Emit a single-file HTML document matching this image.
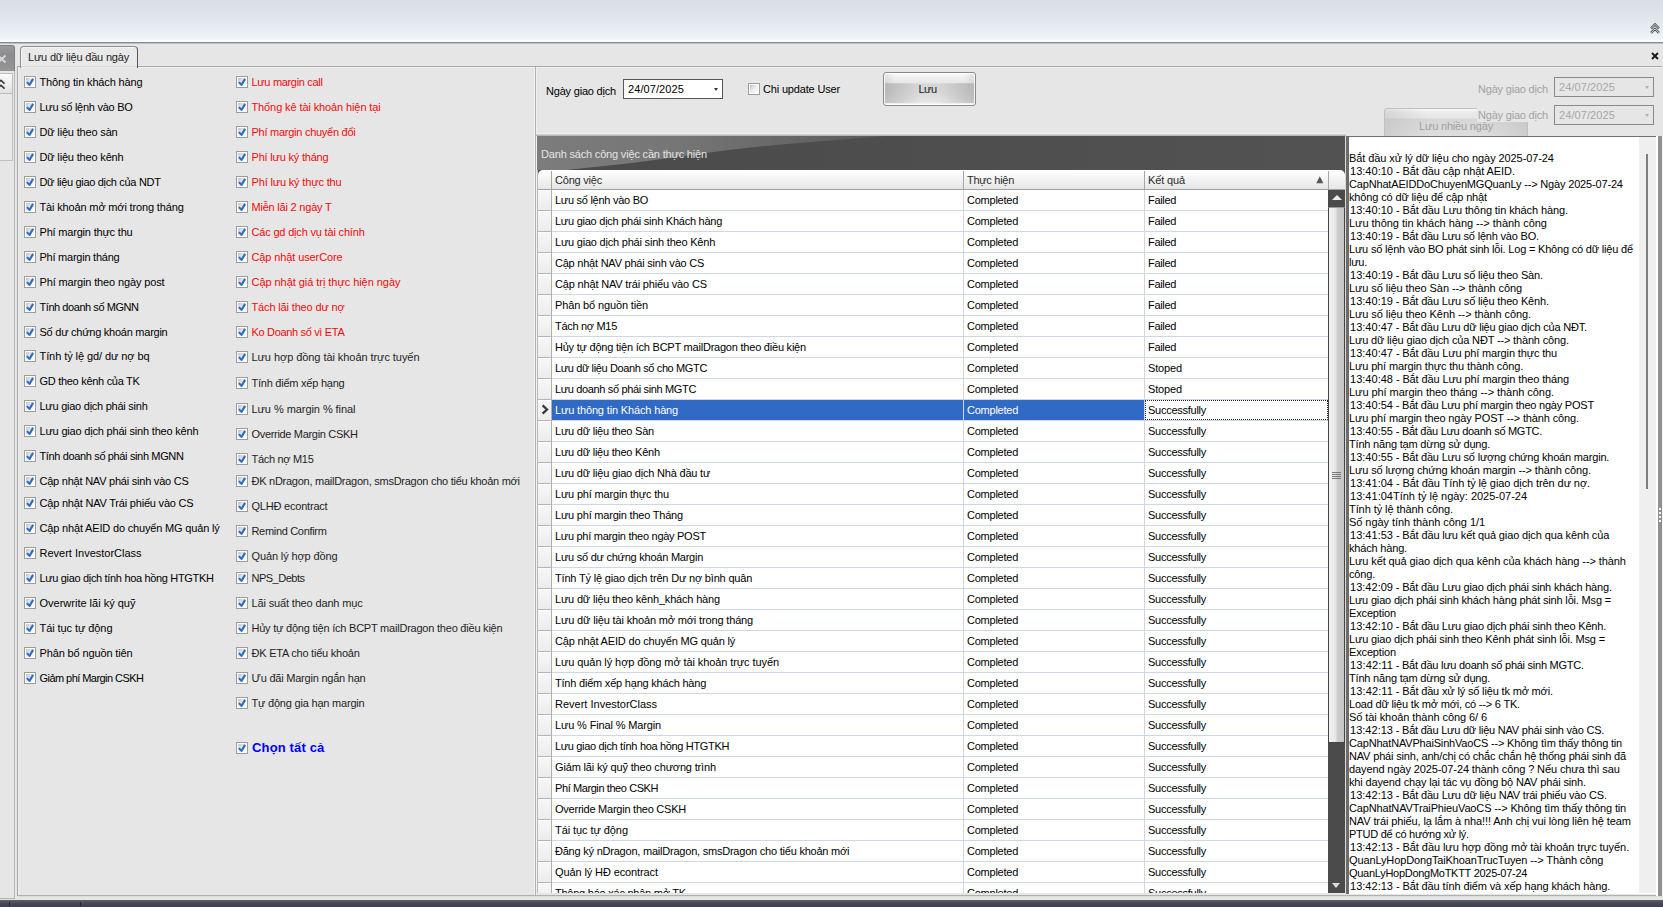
<!DOCTYPE html>
<html><head><meta charset="utf-8"><title>Lưu dữ liệu đầu ngày</title>
<style>
*{box-sizing:border-box;margin:0;padding:0}
html,body{width:1663px;height:907px;overflow:hidden}
body{position:relative;background:#e6e6e6;font-family:"Liberation Sans",sans-serif;font-size:11px;color:#000;letter-spacing:-0.2px}
div,span,pre,i,b,u,s{position:absolute;font-style:normal;font-weight:normal;text-decoration:none}
svg{position:absolute;overflow:visible}
#top{left:0;top:0;width:1663px;height:42px;background:linear-gradient(#d8dde6 0,#dfe4eb 14px,#e7ecf2 28px,#eef2f7 37px,#f8fafc 41px,#fdfefe 42px)}
#topl{left:0;top:42px;width:1663px;height:2px;background:linear-gradient(#858b90 0,#858b90 1px,#bfbfbf 1px,#bfbfbf 2px)}
#ls1{left:0;top:45px;width:15px;height:26px;background:linear-gradient(#9a9a9c,#8c8c8e 40%,#969698);border-right:1px solid #7e7e7e;border-top:1px solid #808080;border-radius:0 3px 0 0}
#ls2{left:0;top:73px;width:13px;height:21px;background:linear-gradient(#fbfbfb,#e2e2e2);border:1px solid #bdbdbd;border-left:0}
#ls3{left:0;top:94px;width:13px;height:67px;background:#e9e9e9;border:1px solid #c0c0c0;border-left:0;border-top:0}
#lsb{left:14px;top:71px;width:1px;height:828px;background:#b8b8b8}
#lsb2{left:0;top:898px;width:15px;height:1px;background:#b0b0b0}
#tab{left:20px;top:46px;width:118px;height:22px;background:#e9e9e9;border:1px solid #8c8c8c;border-right-color:#555;border-bottom:0;border-radius:4px 4px 0 0;box-shadow:inset 1px 1px 0 #f6f6f6}
#tab span{left:7px;top:4px;white-space:nowrap;color:#1c1c1c}
#hl{left:17px;top:66px;width:1645px;height:2px;background:linear-gradient(#a8a8a8 0,#a8a8a8 1px,#f2f2f2 1px,#f2f2f2 2px)}
#hl0{left:21px;top:66px;width:116px;height:2px;background:linear-gradient(#dcdcdc 0,#dcdcdc 1px,#e9e9e9 1px)}
#vl0{left:17px;top:67px;width:2px;height:829px;background:linear-gradient(90deg,#a8a8a8 0,#a8a8a8 1px,#f2f2f2 1px,#f2f2f2 2px)}
#vl1{left:534px;top:67px;width:3px;height:829px;background:linear-gradient(90deg,#f0f0f0 0,#f0f0f0 1px,#b2b2b2 1px,#b2b2b2 2px,#f0f0f0 2px,#f0f0f0 3px)}
#hb{left:18px;top:895px;width:1645px;height:2px;background:linear-gradient(#b0b0b0 0,#b0b0b0 1px,#dcdcdc 1px,#dcdcdc 2px)}
#bot{left:0;top:900px;width:1663px;height:7px;background:linear-gradient(#5d606b,#464954 50%,#3b3e49)}
.ck{width:12px;height:12px}
.cl{white-space:nowrap;line-height:14px;height:14px}
.rd{color:#f40a0a}
.gk{color:#1e1e1e}
.all{font-weight:bold;font-size:13px;color:#0000fa;white-space:nowrap;line-height:17px}
.lb{white-space:nowrap;line-height:14px}
.dis{color:#a2a2a2}
.dt{background:#fff;border:1px solid #555;height:20px}
.dt span{left:4px;top:2px;line-height:14px;white-space:nowrap;letter-spacing:0}
.dt i{right:4.5px;top:8px;width:0;height:0;border:2.5px solid transparent;border-top:3px solid #333;border-bottom:0}
.dt.d{background:#e6e6e6;border-color:#8a8a8a}
.dt.d span{color:#a8a8a8}
.dt.d i{border-top-color:#b0b0b0}
#btn{left:883px;top:72px;width:93px;height:34px;border:1px solid #8a8a8a;border-radius:3px;background:linear-gradient(#fff 0,#f3f3f3 3px,#e6e6e6 10px,#cfcfcf 11px,#d4d4d4 20px,#e0e0e0 29px,#f4f4f4 31px,#fff 32px);box-shadow:inset 0 0 0 1px rgba(255,255,255,.75)}
#btn::before{content:"";position:absolute;left:1px;right:1px;top:10px;bottom:2px;background:linear-gradient(90deg,rgba(140,140,140,.36),rgba(255,255,255,.14) 40%,rgba(255,255,255,.14) 60%,rgba(140,140,140,.36))}
#btn::after{content:"";position:absolute;left:1px;right:1px;top:1px;height:9px;background:linear-gradient(90deg,rgba(170,170,170,.25),rgba(255,255,255,0) 12%,rgba(255,255,255,0) 88%,rgba(170,170,170,.25))}
#btn span{left:-2px;width:100%;text-align:center;top:9px;z-index:2;line-height:14px;color:#222}
#btn2{left:1384px;top:108px;width:144px;height:30px;border:1px solid #c0c0c0;border-radius:3px;background:linear-gradient(90deg,rgba(170,170,170,.3),rgba(255,255,255,0) 30%,rgba(255,255,255,0) 70%,rgba(170,170,170,.3)),linear-gradient(#fbfbfb 0,#ececec 3px,#e6e6e6 9px,#d6d6d6 10px,#dadada 20px,#dedede 30px)}
#btn2 span{left:0;width:100%;text-align:center;top:10px;line-height:14px;color:#a0a0a0}
#grid{left:537px;top:136px;width:808px;height:757px;background:#fff;overflow:hidden}
#gcap{left:537px;top:136px;width:808px;height:34px}
#gcapt{left:541px;top:147px;color:#e4e4e4;white-space:nowrap;line-height:14px}
#ghd{left:538px;top:170px;width:807px;height:20px;background:linear-gradient(#fff,#f4f4f4 45%,#e6e6e6);border-bottom:1px solid #a2a2a2;border-radius:5px 5px 0 0}
#ghd span{top:3px;line-height:14px;color:#2a2a2a;white-space:nowrap}
#ghd i{top:1px;width:1px;height:18px;background:#a6a6a6}
.gr{left:0;width:791px;height:21px;border-bottom:1px solid #cfd7e6}
#grid .gr{top:0}
.gr i{left:1px;top:0;width:14px;height:21px;background:linear-gradient(#f7f7f7,#ececec);border-right:1px solid #b0b0b0;border-bottom:1px solid #b6b6b6;box-shadow:inset 0 1px 0 #fcfcfc}
.gr b,.gr u,.gr s{top:0;height:20px;line-height:20px;white-space:nowrap;overflow:hidden;padding-left:3px}
.gr b{left:15px;width:412px;border-right:1px solid #cfd7e6}
.gr u{left:427px;width:181px;border-right:1px solid #cfd7e6}
.gr s{left:608px;width:183px}
.gr.sel b,.gr.sel u{background:#316ac5;color:#fff}
.gr.sel s{outline:1px dotted #222;outline-offset:-1px}
#sb{left:1328px;top:190px;width:17px;height:703px;background:#4b4b4b}
#sbu{left:0;top:0;width:17px;height:17px;background:#4b4b4b}
#sbu::after{content:"";position:absolute;left:3.5px;top:5px;border:5px solid transparent;border-bottom:5.5px solid #ececec;border-top:0}
#sbt{left:0;top:17px;width:17px;height:536px;background:linear-gradient(90deg,#f2f2f2,#e6e6e6 45%,#cdcdcd 55%,#c6c6c6);border:1px solid #444;border-top:1px solid #999}
#sbt i{left:3px;width:9px;height:1px;background:#777}
#sbd{left:4px;top:693px;border:4.5px solid transparent;border-top:5px solid #e0e0e0;border-bottom:0}
#spl{left:1345px;top:136px;width:4px;height:758px;background:linear-gradient(90deg,#dcdcdc 0,#dcdcdc 1.5px,#6c6c6c 1.5px,#6c6c6c 3.7px,#fff 3.7px)}
#log{left:1349px;top:136px;width:307px;height:758px;background:#fff;border-top:1px solid #707070;overflow:hidden}
#log pre span,.t{position:static}
#log pre{left:0px;top:2px;font-family:"Liberation Sans",sans-serif;font-size:11px;line-height:13px;letter-spacing:-0.15px;color:#000;white-space:pre}
#ltr{left:1639px;top:137px;width:17px;height:756px;background:#efefef}
#lth{left:1646px;top:154px;width:2px;height:335px;background:#7e7e7e}
#rb{left:1656px;top:136px;width:7px;height:760px;background:linear-gradient(90deg,#fff 0,#fff 2px,#909090 2px,#909090 6px,#f4f4f4 6px)}
#rb i{left:3px;width:2px;height:2px;background:#f4f4f4}
#gl{left:537px;top:170px;width:1px;height:723px;background:#bcbcbc}
#ghb{left:538px;top:170px;width:807px;height:8px;background:#4e4e4e}
#pl1{left:536px;top:133px;width:810px;height:3px;background:linear-gradient(#eee 0,#eee 1px,#d0d0d0 1px,#d0d0d0 2px,#b6b6b6 2px)}
#bot i{top:2px;width:1px;height:4px;background:#25272f}

.gr u{letter-spacing:-.24px}
.gr s.Fa{letter-spacing:-.33px}
.gr s.St{letter-spacing:-.15px}
.gr s.Su{letter-spacing:-.26px}

</style></head>
<body>
<svg width="0" height="0" style="left:0;top:0"><defs><linearGradient id="kg" x1="0" y1="0" x2="1" y2="1"><stop offset="0" stop-color="#c4c4c4"/><stop offset="0.55" stop-color="#f0f0f0"/><stop offset="1" stop-color="#fff"/></linearGradient><symbol id="c" viewBox="0 0 12 12"><rect x="0.5" y="0.5" width="11" height="11" fill="#fff" stroke="#9c9c9c"/><rect x="2" y="2" width="8" height="8" fill="url(#kg)"/><path d="M2.9 6.1 L5.5 8.9 L9.1 2.9" fill="none" stroke="#2b6dc2" stroke-width="2.1" stroke-linejoin="round"/></symbol><symbol id="cu" viewBox="0 0 12 12"><rect x="0.5" y="0.5" width="11" height="11" fill="#fff" stroke="#9c9c9c"/><rect x="2" y="2" width="8" height="8" fill="url(#kg)"/></symbol></defs></svg>
<div id="top"></div><div id="topl"></div>
<svg style="left:1650px;top:23px" width="10" height="11" viewBox="0 0 10 11"><path id="cv" d="M1 5.4 L5 1.4 L9 5.4 M1 9.9 L5 5.9 L9 9.9" fill="none" stroke="#505458" stroke-width="2.4"/><path d="M1 5.4 L5 1.4 L9 5.4 M1 9.9 L5 5.9 L9 9.9" fill="none" stroke="#f4f6f8" stroke-width="0.8"/></svg>
<svg style="left:1651px;top:52px" width="8" height="8" viewBox="0 0 8 8"><path d="M1 1 L7 7 M7 1 L1 7" fill="none" stroke="#1a1a1a" stroke-width="1.9"/></svg>
<div id="ls1"></div>
<svg style="left:0;top:55px" width="7" height="8" viewBox="0 0 7 8"><path d="M-2 0.5 L5.5 7.5 M5.5 0.5 L-2 7.5" fill="none" stroke="#d4d8dc" stroke-width="2"/></svg>
<div id="ls2"></div><div id="ls3"></div><div id="lsb"></div><div id="lsb2"></div>
<svg style="left:0;top:79px" width="6" height="11" viewBox="0 0 6 11"><path d="M-2.5 4.6 L1 1.2 L4.5 4.6 M-2.5 9.6 L1 6.2 L4.5 9.6" fill="none" stroke="#333" stroke-width="1.5"/></svg>
<div id="hl"></div><div id="vl0"></div><div id="vl1"></div><div id="hb"></div>
<div id="tab"><span><span class="t" style="letter-spacing:-.18px">Lưu dữ liệu đầu ngày</span></span></div><div id="hl0"></div>
<div class="lb" style="left:546px;top:84px"><span class="t" style="letter-spacing:-.20px">Ngày giao dịch</span></div>
<div class="dt" style="left:623px;top:79px;width:100px"><span><span class="t" style="letter-spacing:.09px">24/07/2025</span></span><i></i></div>
<svg class="ck" style="left:748px;top:83px"><use href="#cu"/></svg>
<div class="lb" style="left:763px;top:82px"><span class="t" style="letter-spacing:-.17px">Chi update User</span></div>
<div id="btn"><span><span class="t" style="letter-spacing:-.54px">Lưu</span></span></div>
<div id="btn2"><span><span class="t" style="letter-spacing:-.18px">Lưu nhiều ngày</span></span></div>
<div style="left:1477px;top:107px;width:72px;height:15px;background:#e6e6e6"></div>
<div class="lb dis" style="left:1478px;top:82px"><span class="t" style="letter-spacing:-.20px">Ngày giao dịch</span></div>
<div class="lb dis" style="left:1478px;top:108px"><span class="t" style="letter-spacing:-.20px">Ngày giao dịch</span></div>
<div class="dt d" style="left:1554px;top:77px;width:100px"><span><span class="t" style="letter-spacing:.09px">24/07/2025</span></span><i></i></div>
<div class="dt d" style="left:1554px;top:105px;width:100px"><span><span class="t" style="letter-spacing:.09px">24/07/2025</span></span><i></i></div>
<div id="lp">
<svg class="ck" style="left:24px;top:76px"><use href="#c"/></svg><div class="cl" style="left:39.5px;top:75px;letter-spacing:-.14px">Thông tin khách hàng</div>
<svg class="ck" style="left:24px;top:101px"><use href="#c"/></svg><div class="cl" style="left:39.5px;top:100px;letter-spacing:-.27px">Lưu số lệnh vào BO</div>
<svg class="ck" style="left:24px;top:126px"><use href="#c"/></svg><div class="cl" style="left:39.5px;top:125px;letter-spacing:-.17px">Dữ liệu theo sàn</div>
<svg class="ck" style="left:24px;top:151px"><use href="#c"/></svg><div class="cl" style="left:39.5px;top:150px;letter-spacing:-.17px">Dữ liệu theo kênh</div>
<svg class="ck" style="left:24px;top:176px"><use href="#c"/></svg><div class="cl" style="left:39.5px;top:175px;letter-spacing:-.32px">Dữ liệu giao dịch của NDT</div>
<svg class="ck" style="left:24px;top:201px"><use href="#c"/></svg><div class="cl" style="left:39.5px;top:200px;letter-spacing:-.15px">Tài khoản mở mới trong tháng</div>
<svg class="ck" style="left:24px;top:226px"><use href="#c"/></svg><div class="cl" style="left:39.5px;top:225px;letter-spacing:-.19px">Phí margin thực thu</div>
<svg class="ck" style="left:24px;top:251px"><use href="#c"/></svg><div class="cl" style="left:39.5px;top:250px;letter-spacing:-.24px">Phí margin tháng</div>
<svg class="ck" style="left:24px;top:276px"><use href="#c"/></svg><div class="cl" style="left:39.5px;top:275px;letter-spacing:-.14px">Phí margin theo ngày post</div>
<svg class="ck" style="left:24px;top:301px"><use href="#c"/></svg><div class="cl" style="left:39.5px;top:300px;letter-spacing:-.44px">Tính doanh số MGNN</div>
<svg class="ck" style="left:24px;top:326px"><use href="#c"/></svg><div class="cl" style="left:39.5px;top:325px;letter-spacing:-.25px">Số dư chứng khoán margin</div>
<svg class="ck" style="left:24px;top:350px"><use href="#c"/></svg><div class="cl" style="left:39.5px;top:349px;letter-spacing:-.08px">Tính tỷ lệ gd/ dư nợ bq</div>
<svg class="ck" style="left:24px;top:375px"><use href="#c"/></svg><div class="cl" style="left:39.5px;top:374px;letter-spacing:-.29px">GD theo kênh của TK</div>
<svg class="ck" style="left:24px;top:400px"><use href="#c"/></svg><div class="cl" style="left:39.5px;top:399px;letter-spacing:-.25px">Lưu giao dịch phái sinh</div>
<svg class="ck" style="left:24px;top:425px"><use href="#c"/></svg><div class="cl" style="left:39.5px;top:424px;letter-spacing:-.19px">Lưu giao dịch phái sinh theo kênh</div>
<svg class="ck" style="left:24px;top:450px"><use href="#c"/></svg><div class="cl" style="left:39.5px;top:449px;letter-spacing:-.36px">Tính doanh số phái sinh MGNN</div>
<svg class="ck" style="left:24px;top:475px"><use href="#c"/></svg><div class="cl" style="left:39.5px;top:474px;letter-spacing:-.23px">Cập nhật NAV phái sinh vào CS</div>
<svg class="ck" style="left:24px;top:497px"><use href="#c"/></svg><div class="cl" style="left:39.5px;top:496px;letter-spacing:-.20px">Cập nhật NAV Trái phiếu vào CS</div>
<svg class="ck" style="left:24px;top:522px"><use href="#c"/></svg><div class="cl" style="left:39.5px;top:521px;letter-spacing:-.17px">Cập nhật AEID do chuyển MG quản lý</div>
<svg class="ck" style="left:24px;top:547px"><use href="#c"/></svg><div class="cl" style="left:39.5px;top:546px;letter-spacing:0px">Revert InvestorClass</div>
<svg class="ck" style="left:24px;top:572px"><use href="#c"/></svg><div class="cl" style="left:39.5px;top:571px;letter-spacing:-.33px">Lưu giao dịch tính hoa hồng HTGTKH</div>
<svg class="ck" style="left:24px;top:597px"><use href="#c"/></svg><div class="cl" style="left:39.5px;top:596px;letter-spacing:0px">Overwrite lãi ký quỹ</div>
<svg class="ck" style="left:24px;top:622px"><use href="#c"/></svg><div class="cl" style="left:39.5px;top:621px;letter-spacing:-.07px">Tái tục tự động</div>
<svg class="ck" style="left:24px;top:647px"><use href="#c"/></svg><div class="cl" style="left:39.5px;top:646px;letter-spacing:-.13px">Phân bổ nguồn tiên</div>
<svg class="ck" style="left:24px;top:672px"><use href="#c"/></svg><div class="cl" style="left:39.5px;top:671px;letter-spacing:-.55px">Giảm phí Margin CSKH</div>
<svg class="ck" style="left:236px;top:76px"><use href="#c"/></svg><div class="cl rd" style="left:251.5px;top:75px;letter-spacing:-.32px">Lưu margin call</div>
<svg class="ck" style="left:236px;top:101px"><use href="#c"/></svg><div class="cl rd" style="left:251.5px;top:100px;letter-spacing:-.11px">Thống kê tài khoản hiện tại</div>
<svg class="ck" style="left:236px;top:126px"><use href="#c"/></svg><div class="cl rd" style="left:251.5px;top:125px;letter-spacing:-.26px">Phí margin chuyển đổi</div>
<svg class="ck" style="left:236px;top:151px"><use href="#c"/></svg><div class="cl rd" style="left:251.5px;top:150px;letter-spacing:-.20px">Phí lưu ký tháng</div>
<svg class="ck" style="left:236px;top:176px"><use href="#c"/></svg><div class="cl rd" style="left:251.5px;top:175px;letter-spacing:-.16px">Phí lưu ký thực thu</div>
<svg class="ck" style="left:236px;top:201px"><use href="#c"/></svg><div class="cl rd" style="left:251.5px;top:200px;letter-spacing:-.21px">Miễn lãi 2 ngày T</div>
<svg class="ck" style="left:236px;top:226px"><use href="#c"/></svg><div class="cl rd" style="left:251.5px;top:225px;letter-spacing:-.18px">Các gd dịch vụ tài chính</div>
<svg class="ck" style="left:236px;top:251px"><use href="#c"/></svg><div class="cl rd" style="left:251.5px;top:250px;letter-spacing:-.11px">Cập nhật userCore</div>
<svg class="ck" style="left:236px;top:276px"><use href="#c"/></svg><div class="cl rd" style="left:251.5px;top:275px;letter-spacing:-.05px">Cập nhật giá trị thực hiện ngày</div>
<svg class="ck" style="left:236px;top:301px"><use href="#c"/></svg><div class="cl rd" style="left:251.5px;top:300px;letter-spacing:-.15px">Tách lãi theo dư nợ</div>
<svg class="ck" style="left:236px;top:326px"><use href="#c"/></svg><div class="cl rd" style="left:251.5px;top:325px;letter-spacing:-.33px">Ko Doanh số vì ETA</div>
<svg class="ck" style="left:236px;top:351px"><use href="#c"/></svg><div class="cl gk" style="left:251.5px;top:350px;letter-spacing:-.06px">Lưu hợp đồng tài khoản trực tuyến</div>
<svg class="ck" style="left:236px;top:377px"><use href="#c"/></svg><div class="cl gk" style="left:251.5px;top:376px;letter-spacing:-.24px">Tính điểm xếp hạng</div>
<svg class="ck" style="left:236px;top:403px"><use href="#c"/></svg><div class="cl gk" style="left:251.5px;top:402px;letter-spacing:-.06px">Lưu % margin % final</div>
<svg class="ck" style="left:236px;top:428px"><use href="#c"/></svg><div class="cl gk" style="left:251.5px;top:427px;letter-spacing:-.32px">Override Margin CSKH</div>
<svg class="ck" style="left:236px;top:453px"><use href="#c"/></svg><div class="cl gk" style="left:251.5px;top:452px;letter-spacing:-.30px">Tách nợ M15</div>
<svg class="ck" style="left:236px;top:475px"><use href="#c"/></svg><div class="cl gk" style="left:251.5px;top:474px;letter-spacing:-.26px">ĐK nDragon, mailDragon, smsDragon cho tiểu khoản mới</div>
<svg class="ck" style="left:236px;top:500px"><use href="#c"/></svg><div class="cl gk" style="left:251.5px;top:499px;letter-spacing:-.21px">QLHĐ econtract</div>
<svg class="ck" style="left:236px;top:525px"><use href="#c"/></svg><div class="cl gk" style="left:251.5px;top:524px;letter-spacing:-.32px">Remind Confirm</div>
<svg class="ck" style="left:236px;top:550px"><use href="#c"/></svg><div class="cl gk" style="left:251.5px;top:549px;letter-spacing:-.12px">Quản lý hợp đồng</div>
<svg class="ck" style="left:236px;top:572px"><use href="#c"/></svg><div class="cl gk" style="left:251.5px;top:571px;letter-spacing:-.50px">NPS_Debts</div>
<svg class="ck" style="left:236px;top:597px"><use href="#c"/></svg><div class="cl gk" style="left:251.5px;top:596px;letter-spacing:-.15px">Lãi suất theo danh mục</div>
<svg class="ck" style="left:236px;top:622px"><use href="#c"/></svg><div class="cl gk" style="left:251.5px;top:621px;letter-spacing:-.22px">Hủy tự động tiện ích BCPT mailDragon theo điều kiện</div>
<svg class="ck" style="left:236px;top:647px"><use href="#c"/></svg><div class="cl gk" style="left:251.5px;top:646px;letter-spacing:-.23px">ĐK ETA cho tiểu khoản</div>
<svg class="ck" style="left:236px;top:672px"><use href="#c"/></svg><div class="cl gk" style="left:251.5px;top:671px;letter-spacing:-.22px">Ưu đãi Margin ngắn hạn</div>
<svg class="ck" style="left:236px;top:697px"><use href="#c"/></svg><div class="cl gk" style="left:251.5px;top:696px;letter-spacing:-.20px">Tự động gia hạn margin</div>
<svg class="ck" style="left:236px;top:742px"><use href="#c"/></svg><div class="all" style="left:252px;top:739px;letter-spacing:.15px">Chọn tất cả</div>
</div>
<div id="grid">
<div class="gr" style="top:54px"><i></i><b style="letter-spacing:-.27px">Lưu số lệnh vào BO</b><u>Completed</u><s class="Fa">Failed</s></div>
<div class="gr" style="top:75px"><i></i><b style="letter-spacing:-.25px">Lưu giao dịch phái sinh Khách hàng</b><u>Completed</u><s class="Fa">Failed</s></div>
<div class="gr" style="top:96px"><i></i><b style="letter-spacing:-.21px">Lưu giao dịch phái sinh theo Kênh</b><u>Completed</u><s class="Fa">Failed</s></div>
<div class="gr" style="top:117px"><i></i><b style="letter-spacing:-.23px">Cập nhật NAV phái sinh vào CS</b><u>Completed</u><s class="Fa">Failed</s></div>
<div class="gr" style="top:138px"><i></i><b style="letter-spacing:-.17px">Cập nhật NAV trái phiếu vào CS</b><u>Completed</u><s class="Fa">Failed</s></div>
<div class="gr" style="top:159px"><i></i><b style="letter-spacing:-.13px">Phân bổ nguồn tiền</b><u>Completed</u><s class="Fa">Failed</s></div>
<div class="gr" style="top:180px"><i></i><b style="letter-spacing:-.30px">Tách nợ M15</b><u>Completed</u><s class="Fa">Failed</s></div>
<div class="gr" style="top:201px"><i></i><b style="letter-spacing:-.22px">Hủy tự động tiện ích BCPT mailDragon theo điều kiện</b><u>Completed</u><s class="Fa">Failed</s></div>
<div class="gr" style="top:222px"><i></i><b style="letter-spacing:-.37px">Lưu dữ liệu Doanh số cho MGTC</b><u>Completed</u><s class="St">Stoped</s></div>
<div class="gr" style="top:243px"><i></i><b style="letter-spacing:-.35px">Lưu doanh số phái sinh MGTC</b><u>Completed</u><s class="St">Stoped</s></div>
<div class="gr sel" style="top:264px"><i></i><b style="letter-spacing:-.15px">Lưu thông tin Khách hàng</b><u>Completed</u><s class="Su">Successfully</s></div>
<div class="gr" style="top:285px"><i></i><b style="letter-spacing:-.22px">Lưu dữ liệu theo Sàn</b><u>Completed</u><s class="Su">Successfully</s></div>
<div class="gr" style="top:306px"><i></i><b style="letter-spacing:-.22px">Lưu dữ liệu theo Kênh</b><u>Completed</u><s class="Su">Successfully</s></div>
<div class="gr" style="top:327px"><i></i><b style="letter-spacing:-.20px">Lưu dữ liệu giao dịch Nhà đầu tư</b><u>Completed</u><s class="Su">Successfully</s></div>
<div class="gr" style="top:348px"><i></i><b style="letter-spacing:-.18px">Lưu phí margin thực thu</b><u>Completed</u><s class="Su">Successfully</s></div>
<div class="gr" style="top:369px"><i></i><b style="letter-spacing:-.21px">Lưu phí margin theo Tháng</b><u>Completed</u><s class="Su">Successfully</s></div>
<div class="gr" style="top:390px"><i></i><b style="letter-spacing:-.28px">Lưu phí margin theo ngày POST</b><u>Completed</u><s class="Su">Successfully</s></div>
<div class="gr" style="top:411px"><i></i><b style="letter-spacing:-.24px">Lưu số dư chứng khoán Margin</b><u>Completed</u><s class="Su">Successfully</s></div>
<div class="gr" style="top:432px"><i></i><b style="letter-spacing:-.18px">Tính Tỷ lệ giao dịch trên Dư nợ bình quân</b><u>Completed</u><s class="Su">Successfully</s></div>
<div class="gr" style="top:453px"><i></i><b style="letter-spacing:-.18px">Lưu dữ liệu theo kênh_khách hàng</b><u>Completed</u><s class="Su">Successfully</s></div>
<div class="gr" style="top:474px"><i></i><b style="letter-spacing:-.15px">Lưu dữ liệu tài khoản mở mới trong tháng</b><u>Completed</u><s class="Su">Successfully</s></div>
<div class="gr" style="top:495px"><i></i><b style="letter-spacing:-.17px">Cập nhật AEID do chuyển MG quản lý</b><u>Completed</u><s class="Su">Successfully</s></div>
<div class="gr" style="top:516px"><i></i><b style="letter-spacing:-.09px">Lưu quản lý hợp đồng mở tài khoản trực tuyến</b><u>Completed</u><s class="Su">Successfully</s></div>
<div class="gr" style="top:537px"><i></i><b style="letter-spacing:-.21px">Tính điểm xếp hạng khách hàng</b><u>Completed</u><s class="Su">Successfully</s></div>
<div class="gr" style="top:558px"><i></i><b style="letter-spacing:0px">Revert InvestorClass</b><u>Completed</u><s class="Su">Successfully</s></div>
<div class="gr" style="top:579px"><i></i><b style="letter-spacing:-.14px">Lưu % Final % Margin</b><u>Completed</u><s class="Su">Successfully</s></div>
<div class="gr" style="top:600px"><i></i><b style="letter-spacing:-.33px">Lưu giao dịch tính hoa hồng HTGTKH</b><u>Completed</u><s class="Su">Successfully</s></div>
<div class="gr" style="top:621px"><i></i><b style="letter-spacing:-.16px">Giảm lãi ký quỹ theo chương trình</b><u>Completed</u><s class="Su">Successfully</s></div>
<div class="gr" style="top:642px"><i></i><b style="letter-spacing:-.41px">Phí Margin theo CSKH</b><u>Completed</u><s class="Su">Successfully</s></div>
<div class="gr" style="top:663px"><i></i><b style="letter-spacing:-.24px">Override Margin theo CSKH</b><u>Completed</u><s class="Su">Successfully</s></div>
<div class="gr" style="top:684px"><i></i><b style="letter-spacing:-.07px">Tái tục tự động</b><u>Completed</u><s class="Su">Successfully</s></div>
<div class="gr" style="top:705px"><i></i><b style="letter-spacing:-.22px">Đăng ký nDragon, mailDragon, smsDragon cho tiểu khoản mới</b><u>Completed</u><s class="Su">Successfully</s></div>
<div class="gr" style="top:726px"><i></i><b style="letter-spacing:-.11px">Quản lý HĐ econtract</b><u>Completed</u><s class="Su">Successfully</s></div>
<div class="gr" style="top:747px"><i></i><b style="letter-spacing:-.24px">Thông báo xác nhận mở TK</b><u>Completed</u><s class="Su">Successfully</s></div>
</div>
<svg id="gcap" width="808" height="34" viewBox="0 0 808 34"><defs><linearGradient id="cg" gradientUnits="userSpaceOnUse" x1="0" y1="0" x2="348" y2="0"><stop offset="0" stop-color="#7c7c7c"/><stop offset="0.4" stop-color="#767676"/><stop offset="1" stop-color="#5a5a5a"/></linearGradient><linearGradient id="cd" x1="0" y1="0" x2="1" y2="0"><stop offset="0" stop-color="#4a4a4a"/><stop offset="1" stop-color="#525252"/></linearGradient></defs><rect width="808" height="34" fill="url(#cd)"/><path d="M0 0 H348 L312 2.9 Q275 5.6 239 8.9 T167 17.3 T95 27 L30 34 H0 Z" fill="url(#cg)"/></svg>
<div id="gcapt"><span class="t" style="letter-spacing:-.18px">Danh sách công việc cần thực hiện</span></div>
<div id="pl1"></div><div id="ghb"></div><div id="ghd"><i style="left:13px"></i><span style="left:17px"><span class="t" style="letter-spacing:-.21px">Công việc</span></span><i style="left:425px"></i><span style="left:429px"><span class="t" style="letter-spacing:-.28px">Thực hiện</span></span><i style="left:606px"></i><span style="left:610px"><span class="t" style="letter-spacing:-.13px">Kết quả</span></span><i style="left:790px"></i>
<svg style="left:778px;top:6px" width="8" height="8" viewBox="0 0 8 8"><path d="M0.3 7.3 L3.8 0.2 L7.3 7.3 Z" fill="#555"/></svg></div>
<svg style="left:541px;top:404px" width="8" height="11" viewBox="0 0 8 11"><path d="M1.6 1.4 L6 5.5 L1.6 9.6" fill="none" stroke="#383838" stroke-width="2.3"/></svg><div id="gl"></div>
<div id="sb"><div id="sbu"></div><div id="sbt"><i style="top:264px"></i><i style="top:266px"></i><i style="top:268px"></i><i style="top:270px"></i></div><div id="sbd"></div></div>
<div id="spl"></div>
<div id="log"><pre>

<span style="letter-spacing:-.09px">Bắt đầu xử lý dữ liệu cho ngày 2025-07-24</span>
<span style="margin-left:1px;letter-spacing:.02px">13:40:10</span><span style="letter-spacing:-.09px"> - Bắt đầu cập nhật AEID.</span>
<span style="letter-spacing:-.17px">CapNhatAEIDDoChuyenMGQuanLy --&gt; Ngày 2025-07-24</span>
<span style="letter-spacing:-.14px">không có dữ liệu để cập nhật</span>
<span style="margin-left:1px;letter-spacing:.02px">13:40:10</span><span style="letter-spacing:-.10px"> - Bắt đầu Lưu thông tin khách hàng.</span>
<span style="letter-spacing:-.03px">Lưu thông tin khách hàng --&gt; thành công</span>
<span style="margin-left:1px;letter-spacing:.02px">13:40:19</span><span style="letter-spacing:-.19px"> - Bắt đầu Lưu số lệnh vào BO.</span>
<span style="letter-spacing:-.19px">Lưu số lệnh vào BO phát sinh lỗi. Log = Không có dữ liệu để</span>
<span style="letter-spacing:-.25px">lưu.</span>
<span style="margin-left:1px;letter-spacing:.02px">13:40:19</span><span style="letter-spacing:-.17px"> - Bắt đầu Lưu số liệu theo Sàn.</span>
<span style="letter-spacing:-.08px">Lưu số liệu theo Sàn --&gt; thành công</span>
<span style="margin-left:1px;letter-spacing:.02px">13:40:19</span><span style="letter-spacing:-.17px"> - Bắt đầu Lưu số liệu theo Kênh.</span>
<span style="letter-spacing:-.08px">Lưu số liệu theo Kênh --&gt; thành công.</span>
<span style="margin-left:1px;letter-spacing:.02px">13:40:47</span><span style="letter-spacing:-.21px"> - Bắt đầu Lưu dữ liệu giao dịch của NĐT.</span>
<span style="letter-spacing:-.16px">Lưu dữ liệu giao dịch của NĐT --&gt; thành công.</span>
<span style="margin-left:1px;letter-spacing:.02px">13:40:47</span><span style="letter-spacing:-.14px"> - Bắt đầu Lưu phí margin thực thu</span>
<span style="letter-spacing:-.13px">Lưu phí margin thực thu thành công.</span>
<span style="margin-left:1px;letter-spacing:.02px">13:40:48</span><span style="letter-spacing:-.12px"> - Bắt đầu Lưu phí margin theo tháng</span>
<span style="letter-spacing:-.05px">Lưu phí margin theo tháng --&gt; thành công.</span>
<span style="margin-left:1px;letter-spacing:.02px">13:40:54</span><span style="letter-spacing:-.22px"> - Bắt đầu Lưu phí margin theo ngày POST</span>
<span style="letter-spacing:-.14px">Lưu phí margin theo ngày POST --&gt; thành công.</span>
<span style="margin-left:1px;letter-spacing:.02px">13:40:55</span><span style="letter-spacing:-.28px"> - Bắt đầu Lưu doanh số MGTC.</span>
<span style="letter-spacing:-.19px">Tính năng tạm dừng sử dụng.</span>
<span style="margin-left:1px;letter-spacing:.02px">13:40:55</span><span style="letter-spacing:-.19px"> - Bắt đầu Lưu số lượng chứng khoán margin.</span>
<span style="letter-spacing:-.13px">Lưu số lượng chứng khoán margin --&gt; thành công.</span>
<span style="margin-left:1px;letter-spacing:.02px">13:41:04</span><span style="letter-spacing:-.09px"> - Bắt đầu Tính tỷ lệ giao dịch trên dư nợ.</span>
<span style="margin-left:1px;letter-spacing:.02px">13:41:04</span><span style="letter-spacing:-.02px">Tính tỷ lệ ngày: 2025-07-24</span>
<span style="letter-spacing:-.08px">Tính tỷ lệ thành công.</span>
<span style="letter-spacing:-.06px">Số ngày tính thành công 1/1</span>
<span style="margin-left:1px;letter-spacing:.02px">13:41:53</span><span style="letter-spacing:-.13px"> - Bắt đầu lưu kết quả giao dịch qua kênh của</span>
<span style="letter-spacing:-.18px">khách hàng.</span>
<span style="letter-spacing:-.10px">Lưu kết quả giao dịch qua kênh của khách hàng --&gt; thành</span>
<span style="letter-spacing:-.18px">công.</span>
<span style="margin-left:1px;letter-spacing:.02px">13:42:09</span><span style="letter-spacing:-.19px"> - Bắt đầu Lưu giao dịch phái sinh khách hàng.</span>
<span style="letter-spacing:-.18px">Lưu giao dịch phái sinh khách hàng phát sinh lỗi. Msg =</span>
<span style="letter-spacing:-.15px">Exception</span>
<span style="margin-left:1px;letter-spacing:.02px">13:42:10</span><span style="letter-spacing:-.17px"> - Bắt đầu Lưu giao dịch phái sinh theo Kênh.</span>
<span style="letter-spacing:-.17px">Lưu giao dịch phái sinh theo Kênh phát sinh lỗi. Msg =</span>
<span style="letter-spacing:-.15px">Exception</span>
<span style="margin-left:1px;letter-spacing:.12px">13:42:11</span><span style="letter-spacing:-.25px"> - Bắt đầu lưu doanh số phái sinh MGTC.</span>
<span style="letter-spacing:-.19px">Tính năng tạm dừng sử dụng.</span>
<span style="margin-left:1px;letter-spacing:.12px">13:42:11</span><span style="letter-spacing:-.16px"> - Bắt đầu xử lý số liệu tk mở mới.</span>
<span style="letter-spacing:-.19px">Load dữ liệu tk mở mới, có --&gt; 6 TK.</span>
<span style="letter-spacing:-.07px">Số tài khoản thành công 6/ 6</span>
<span style="margin-left:1px;letter-spacing:.02px">13:42:13</span><span style="letter-spacing:-.23px"> - Bắt đầu Lưu dữ liệu NAV phái sinh vào CS.</span>
<span style="letter-spacing:-.18px">CapNhatNAVPhaiSinhVaoCS --&gt; Không tìm thấy thông tin</span>
<span style="letter-spacing:-.17px">NAV phái sinh, anh/chị có chắc chắn hệ thống phái sinh đã</span>
<span style="letter-spacing:-.11px">dayend ngày 2025-07-24 thành công ? Nếu chưa thì sau</span>
<span style="letter-spacing:-.14px">khi dayend chạy lại tác vụ đồng bộ NAV phái sinh.</span>
<span style="margin-left:1px;letter-spacing:.02px">13:42:13</span><span style="letter-spacing:-.19px"> - Bắt đầu Lưu dữ liệu NAV trái phiếu vào CS.</span>
<span style="letter-spacing:-.15px">CapNhatNAVTraiPhieuVaoCS --&gt; Không tìm thấy thông tin</span>
<span style="letter-spacing:-.11px">NAV trái phiếu, lạ lắm à nha!!! Anh chị vui lòng liên hệ team</span>
<span style="letter-spacing:-.26px">PTUD để có hướng xử lý.</span>
<span style="margin-left:1px;letter-spacing:.02px">13:42:13</span><span style="letter-spacing:-.07px"> - Bắt đầu lưu hợp đồng mở tài khoản trực tuyến.</span>
<span style="letter-spacing:-.13px">QuanLyHopDongTaiKhoanTrucTuyen --&gt; Thành công</span>
<span style="letter-spacing:-.28px">QuanLyHopDongMoTKTT 2025-07-24</span>
<span style="margin-left:1px;letter-spacing:.02px">13:42:13</span><span style="letter-spacing:-.11px"> - Bắt đầu tính điểm và xếp hạng khách hàng.</span></pre></div>
<div id="ltr"></div><div id="lth"></div>
<div id="rb"><i style="top:372px"></i><i style="top:376px"></i><i style="top:380px"></i><i style="top:384px"></i></div>
<div id="bot"><i style="left:9px"></i><i style="left:80px"></i></div>
</body></html>
